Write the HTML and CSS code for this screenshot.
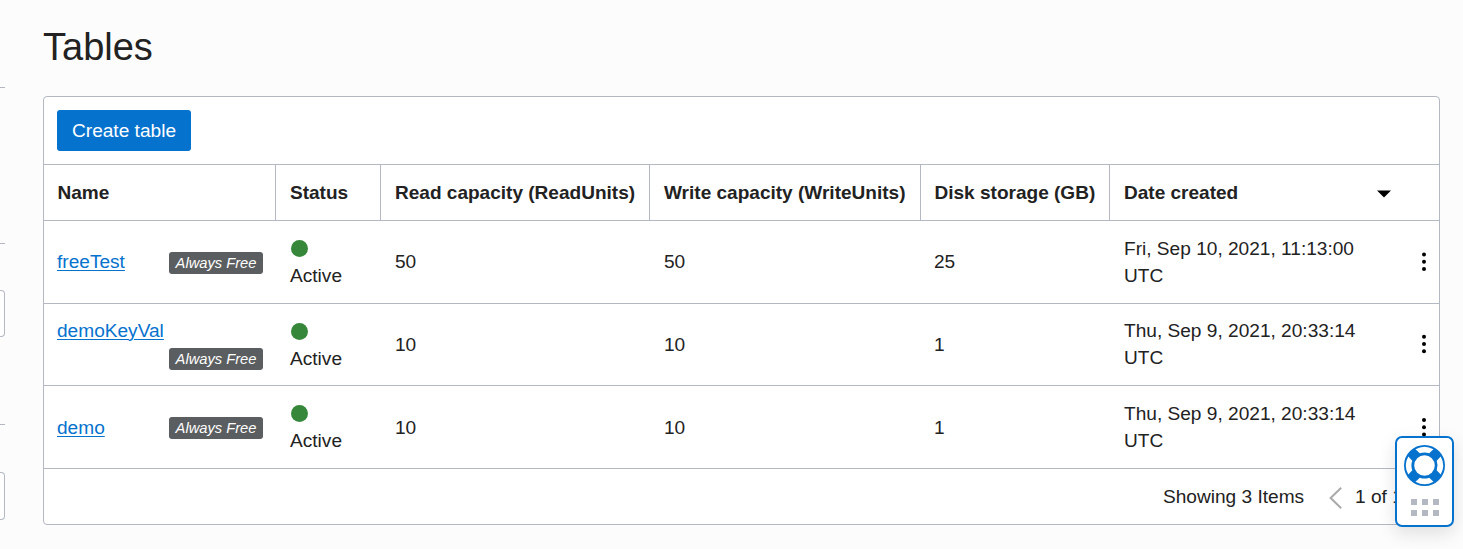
FILE: index.html
```html
<!DOCTYPE html>
<html lang="en">
<head>
<meta charset="utf-8">
<title>Tables</title>
<link rel="stylesheet" href="styles.css">
</head>
<body>
<div class="page">
  <aside class="filters">
    <div class="filter-group"></div>
    <div class="filter-group"><div class="filter-input"></div></div>
    <div class="filter-group"><div class="filter-input tall"></div></div>
  </aside>
  <main class="main">
    <h1 class="title">Tables</h1>
    <section class="panel">
      <div class="toolbar"><button class="create">Create table</button></div>
      <div class="row head">
        <div class="cell">Name</div>
        <div class="cell">Status</div>
        <div class="cell">Read capacity (ReadUnits)</div>
        <div class="cell">Write capacity (WriteUnits)</div>
        <div class="cell disk">Disk storage (GB)</div>
        <div class="cell sort">Date created
          <svg class="caret" width="14" height="8" viewBox="0 0 14 8"><path d="M0 0.5H14L7 7.6Z"/></svg>
        </div>
      </div>
      <div class="row">
        <div class="cell name"><a class="link" href="#">freeTest</a><span class="badge">Always Free</span></div>
        <div class="cell status"><span class="dot"></span><span>Active</span></div>
        <div class="cell">50</div>
        <div class="cell">50</div>
        <div class="cell disk">25</div>
        <div class="cell date"><span class="stamp">Fri, Sep 10, 2021, 11:13:00 UTC</span>
          <svg class="kebab" width="6" height="20" viewBox="0 0 6 20"><circle cx="3" cy="2.5" r="2"/><circle cx="3" cy="9.7" r="2"/><circle cx="3" cy="16.9" r="2"/></svg></div>
      </div>
      <div class="row short">
        <div class="cell name wrap"><a class="link" href="#">demoKeyVal</a><span class="badge">Always Free</span></div>
        <div class="cell status"><span class="dot"></span><span>Active</span></div>
        <div class="cell">10</div>
        <div class="cell">10</div>
        <div class="cell disk">1</div>
        <div class="cell date"><span class="stamp">Thu, Sep 9, 2021, 20:33:14 UTC</span>
          <svg class="kebab" width="6" height="20" viewBox="0 0 6 20"><circle cx="3" cy="2.8" r="2"/><circle cx="3" cy="10" r="2"/><circle cx="3" cy="17.2" r="2"/></svg></div>
      </div>
      <div class="row last">
        <div class="cell name"><a class="link" href="#">demo</a><span class="badge">Always Free</span></div>
        <div class="cell status"><span class="dot"></span><span>Active</span></div>
        <div class="cell low">10</div>
        <div class="cell low">10</div>
        <div class="cell low disk">1</div>
        <div class="cell date"><span class="stamp">Thu, Sep 9, 2021, 20:33:14 UTC</span>
          <svg class="kebab" width="6" height="20" viewBox="0 0 6 20"><circle cx="3" cy="3" r="2"/><circle cx="3" cy="10.2" r="2"/><circle cx="3" cy="17.4" r="2"/></svg></div>
      </div>
      <div class="footer">
        <span class="count">Showing 3 Items</span>
        <svg class="prev" width="14" height="22" viewBox="0 0 14 22"><path d="M12.2 0.8L1.6 11L12.2 21.2"/></svg>
        <span class="pages">1 of 1</span>
      </div>
    </section>
  </main>
</div>
<div class="help">
  <svg width="42" height="42" viewBox="-20.5 -20.5 42 42">
    <circle class="ring" r="15.4"/>
    <g class="gaps">
      <path d="M-9 -16.2A18.5 18.5 0 0 1 9 -16.2L4.7 -12.2A13.1 13.1 0 0 0 -4.7 -12.2Z"/>
      <path transform="rotate(90)" d="M-9 -16.2A18.5 18.5 0 0 1 9 -16.2L4.7 -12.2A13.1 13.1 0 0 0 -4.7 -12.2Z"/>
      <path transform="rotate(180)" d="M-9 -16.2A18.5 18.5 0 0 1 9 -16.2L4.7 -12.2A13.1 13.1 0 0 0 -4.7 -12.2Z"/>
      <path transform="rotate(270)" d="M-9 -16.2A18.5 18.5 0 0 1 9 -16.2L4.7 -12.2A13.1 13.1 0 0 0 -4.7 -12.2Z"/>
    </g>
  </svg>
  <div class="grip"><i></i><i></i><i></i><i></i><i></i><i></i></div>
</div>
</body>
</html>
```
FILE: styles.css
```css
* { box-sizing: border-box; }
body {
  margin: 0;
  height: 549px;
  overflow: hidden;
  background: #fcfcfc;
  color: #222;
  font: 19.1px/27px "Liberation Sans", Arial, sans-serif;
}
.page { display: flex; height: 549px; }
.filters { width: 5px; padding-top: 87px; }
.filter-group { height: 181px; padding-top: 46px; border-top: 1px solid #b3b8c2; }
.filter-group:first-child { height: 156px; }
.filter-group:last-child { height: 125px; }
.filter-input {
  height: 47px;
  border: 1px solid #b3b8c2;
  border-left: 0;
  border-radius: 0 4px 4px 0;
  background: #fff;
}
.filter-input.tall { height: 48px; margin-top: 1px; }
.main { margin-left: 38px; width: 1397px; }
.title { margin: 0; height: 96px; padding-top: 25px; font-size: 38px; line-height: 44px; font-weight: 400; }
.panel { height: 429px; background: #fff; border: 1px solid #b3b8c2; border-radius: 4px; }
.toolbar { height: 67px; padding: 13px; }
.create {
  display: block;
  width: 134px;
  height: 41px;
  padding: 0;
  border: 0;
  border-radius: 3px;
  background: #0572ce;
  color: #fff;
  font: inherit;
}
.row {
  display: grid;
  grid-template-columns: 232px 105px 269px 271px 189px 329px;
  height: 83px;
  border-top: 1px solid #b3b8c2;
}
.row.short { height: 82px; }
.row.head { height: 56px; font-size: 19.05px; font-weight: 700; }
.cell { display: flex; align-items: center; padding: 0 0 1px 14px; white-space: nowrap; }
.cell.disk { padding-left: 13px; }
.cell.low { padding-bottom: 0; padding-top: 1px; }
.head .cell { border-right: 1px solid #b3b8c2; }
.head .cell:first-child { padding-left: 13.5px; }
.head .cell.disk { padding-left: 13.5px; }
.head .sort { justify-content: space-between; padding-right: 48px; border-right: 0; }
.caret { fill: #000; margin-top: 3px; }
.cell.name { justify-content: space-between; padding: 0 13px 0 13px; }
.cell.name.wrap { flex-direction: column; align-items: flex-start; justify-content: flex-start; padding-top: 16px; }
.link { color: #0572ce; line-height: 22px; text-decoration: underline; text-decoration-thickness: 1px; text-underline-offset: 2px; }
.last .link { margin-top: 2px; }
.wrap .badge { align-self: flex-end; margin-top: 6px; }
.badge {
  width: 94px;
  height: 22px;
  margin-top: 2px;
  border-radius: 3px;
  background: #5b5e60;
  color: #fff;
  font-size: 14.7px;
  line-height: 22px;
  font-style: italic;
  text-align: center;
}
.cell.status { flex-direction: column; align-items: flex-start; justify-content: flex-start; padding-top: 19px; }
.dot { width: 17px; height: 17px; margin: 0 0 5px 1px; border-radius: 50%; background: #36873a; }
.cell.date { justify-content: space-between; padding-right: 12px; }
.stamp { width: 240px; white-space: normal; }
.kebab { fill: #000; }
.footer {
  display: flex;
  align-items: center;
  height: 56px;
  padding-left: 1119px;
  border-top: 1px solid #b3b8c2;
  white-space: nowrap;
}
.count { width: 166px; }
.prev { margin: 3px 12px 0 0; fill: none; stroke: #aaa; stroke-width: 2; }
.help {
  position: fixed;
  left: 1395px;
  top: 436px;
  width: 59px;
  height: 91px;
  display: flex;
  flex-direction: column;
  align-items: center;
  padding-top: 7px;
  border: 2px solid #0572ce;
  border-radius: 7px;
  background: #fff;
  box-shadow: 0 6px 18px rgba(0, 0, 0, .12);
}
.ring { fill: none; stroke: #0572ce; stroke-width: 10.2; }
.gaps { fill: #fff; }
.grip { display: grid; grid-template-columns: repeat(3, 6px); gap: 5px; margin-top: 12px; }
.grip i { height: 6px; background: #b3b8c2; }
```
